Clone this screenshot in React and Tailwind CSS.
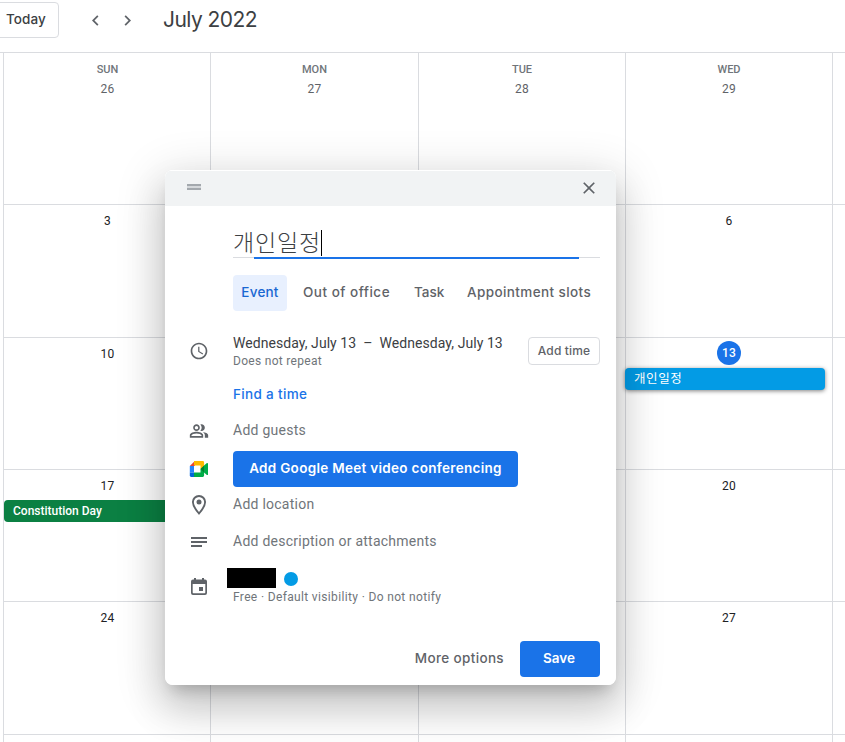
import { MdAccessTime, MdChevronLeft, MdChevronRight, MdClose, MdOutlinePeopleAlt } from "react-icons/md";

const weeks = [
  { days: ["26", "27", "28", "29", ""] },
  { days: ["3", "", "", "6", ""] },
  { days: ["10", "", "", "13", ""] },
  { days: ["17", "", "", "20", ""] },
  { days: ["24", "", "", "27", ""] },
  { days: ["", "", "", "", ""] },
];

const weekdays = ["SUN", "MON", "TUE", "WED", ""];

function Day({ day, week, col }) {
  const isToday = day === "13";
  return (
    <div className={`border-t border-[#dadce0] text-center ${col > 0 ? "border-l" : "pl-px"}`}>
      {week === 0 && (
        <div className="mt-[9px] h-4 text-[11px] leading-4 font-medium text-[#70757a]">{weekdays[col]}</div>
      )}
      {isToday ? (
        <div className="mx-auto mt-[3px] flex size-6 items-center justify-center rounded-full bg-[#1a73e8] text-xs font-medium tracking-[0.3px] text-white">
          {day}
        </div>
      ) : (
        <div
          className={`h-4 text-xs leading-4 tracking-[0.3px] ${
            week === 0 ? "mt-[3px] text-[#5f6368]" : "mt-2 text-[#202124]"
          }`}
        >
          {day}
        </div>
      )}
      {isToday && (
        <div className="-ml-px mt-[3px] h-[22px] w-[200px] rounded bg-[#039be5] pl-[9px] text-left text-[12.5px] leading-[22px] tracking-[0.6px] text-white shadow-[0_1px_4px_rgba(0,0,0,0.5)]">
          개인일정
        </div>
      )}
      {day === "17" && (
        <div className="-ml-px mt-1.5 h-[22px] w-[200px] rounded bg-[#0b8043] pl-[9px] text-left text-xs leading-[22px] font-medium text-white">
          Constitution Day
        </div>
      )}
    </div>
  );
}

function MeetLogo() {
  return (
    <svg width="20" height="20" viewBox="0 0 20 20" className="-mt-px">
      <path d="M.8 7 5.8 2v5z" fill="#ea4335" />
      <path d="M.8 7h4.2v6.5H.8z" fill="#2684fc" />
      <path d="M.8 13.5H5V18H2.200A1.400 1.400 0 0 1 .8 16.600z" fill="#0066da" />
      <path d="M5 2h8.700a1.400 1.400 0 0 1 1.400 1.400V8l-3.600 2V6.500H5z" fill="#ffba00" />
      <path d="M5 13.500h6.500V10l3.600-3v9.600a1.400 1.400 0 0 1-1.400 1.400H5z" fill="#00ac47" />
      <path d="m11.500 10 3.600-3.500v7z" fill="#00832d" />
      <path d="m15 6.500 2.900-2.400c.5-.4 1.100-.1 1.100.5v10.800c0 .6-.6.900-1.100.5L15 13.500z" fill="#00ac47" />
    </svg>
  );
}

function PlaceIcon() {
  return (
    <svg width="16" height="20" viewBox="0 0 16 20" fill="none" stroke="currentColor" strokeWidth="1.9" className="shrink-0">
      <path d="M8 1a6.100 6.100 0 0 0-6.100 6.100C1.900 11.500 8 18.500 8 18.500s6.100-7 6.100-11.400A6.100 6.100 0 0 0 8 1z" />
      <circle cx="8" cy="7.1" r="2.5" fill="currentColor" stroke="none" />
    </svg>
  );
}

function NotesIcon() {
  return (
    <svg width="16" height="10" viewBox="0 0 16 10" fill="currentColor">
      <path d="M0 0h16v2H0zM0 4h16v2H0zM0 8h11v2H0z" />
    </svg>
  );
}

function CalendarIcon() {
  return (
    <svg width="16" height="17" viewBox="0 0 16 17" fill="currentColor">
      <path
        fillRule="evenodd"
        d="M3 0h2v1.500h6V0h2v1.500h1A2 2 0 0 1 16 3.500V15a2 2 0 0 1-2 2H2a2 2 0 0 1-2-2V3.500a2 2 0 0 1 2-2h1zM1.700 6v8.600c0 .4.300.700.700.700h11.200c.4 0 .7-.3.700-.7V6z"
      />
      <path d="M8 9h4v4H8z" />
    </svg>
  );
}

function Row({ icon, className, children }) {
  return (
    <div className={`flex items-center gap-6 pl-6 ${className}`}>
      <div className="flex size-5 shrink-0 items-center justify-center text-[#5f6368]">{icon}</div>
      {children}
    </div>
  );
}

function EventDialog() {
  return (
    <div className="absolute top-[170px] left-[165px] h-[515px] w-[451px] overflow-hidden rounded-lg bg-white pt-px">
      <div className="flex h-[35px] items-center justify-between bg-[#f1f3f4] pr-[17px] pl-[22px]">
        <div className="mb-[3px] h-[6px] w-[14px] border-y-2 border-[#a3a8ad] bg-[#d5d8db]" />
        <MdClose size={20} className="mb-0.5 text-[#5f6368]" />
      </div>

      <div className="mr-4 ml-[68px] h-[53px] pt-[21px]">
        <div className="flex h-[31px] items-center border-b border-[#dadce0] font-['Noto_Sans_CJK_KR',sans-serif] text-[23px] font-light text-[#3c4043]">
          <span className="mb-0.5 whitespace-nowrap tracking-[0.8px]">개인일정</span>
          <span className="mt-px h-[26px] w-px bg-black" />
        </div>
        <div className="relative -mt-px mr-[21px] ml-[21px] h-[2px] bg-[#1a73e8]" />
      </div>

      <div className="mt-4 ml-[68px] flex h-9 items-center pb-0.5 font-['Inter',sans-serif] text-[13.5px] font-medium text-[#5f6368]">
        <div className="-mb-0.5 flex h-9 w-[54px] items-center justify-center rounded bg-[#e8f0fe] pb-0.5 tracking-[0.2px] text-[#1967d2]">
          Event
        </div>
        <span className="ml-4 w-[111px] whitespace-nowrap tracking-[0.5px]">Out of office</span>
        <span className="w-[53px]">Task</span>
        <span className="whitespace-nowrap tracking-[0.4px]">Appointment slots</span>
      </div>

      <Row icon={<MdAccessTime size={20} />} className="mt-5 h-10">
        <div className="w-[271px]">
          <div className="text-sm leading-5 tracking-[0.06px] whitespace-pre text-[#3c4043]">
            {"Wednesday, July 13  –  Wednesday, July 13"}
          </div>
          <div className="text-xs leading-[17px] tracking-[0.3px] text-[#70757a]">Does not repeat</div>
        </div>
        <button className="h-7 w-[72px] rounded border border-[#dadce0] font-['Inter',sans-serif] text-xs font-medium tracking-[0.15px] whitespace-nowrap text-[#5f6368]">
          Add time
        </button>
      </Row>
      <div className="ml-[68px] h-10 pt-[13px] font-['Inter',sans-serif] text-[13.5px] leading-5 font-medium tracking-[0.33px] text-[#1a73e8]">
        Find a time
      </div>

      <Row icon={<MdOutlinePeopleAlt size={20} />} className="h-10 text-sm tracking-[0.25px] text-[#70757a]">
        <span className="mb-0.5">Add guests</span>
      </Row>
      <Row icon={<MeetLogo />} className="h-9">
        <button className="h-9 w-[285px] rounded bg-[#1a73e8] pb-0.5 font-['Inter',sans-serif] text-[13.5px] font-semibold tracking-[0.3px] whitespace-nowrap text-white">
          Add Google Meet video conferencing
        </button>
      </Row>
      <Row icon={<PlaceIcon />} className="h-9 text-sm tracking-[0.25px] text-[#70757a]">
        <span className="mb-0.5">Add location</span>
      </Row>
      <Row icon={<NotesIcon />} className="h-[37px] text-sm tracking-[0.25px] text-[#70757a]">
        <span className="mb-0.5">Add description or attachments</span>
      </Row>
      <Row icon={<CalendarIcon />} className="h-[53px]">
        <div>
          <div className="-ml-1.5 flex h-5 items-center gap-2">
            <div className="h-5 w-[49px] bg-black" />
            <div className="mt-0.5 size-3.5 rounded-full bg-[#039be5]" />
          </div>
          <div className="h-[17px] pt-px text-xs leading-[17px] tracking-[0.35px] whitespace-nowrap text-[#70757a]">
            Free · Default visibility · Do not notify
          </div>
        </div>
      </Row>

      <div className="mt-7 mr-4 flex h-9 items-center justify-end gap-4 font-['Inter',sans-serif] text-[13.5px]">
        <span className="pb-0.5 font-medium tracking-[0.35px] text-[#5f6368]">More options</span>
        <button className="h-9 w-20 rounded bg-[#1a73e8] pr-[9px] pb-0.5 pl-[7px] font-semibold text-white">Save</button>
      </div>
    </div>
  );
}

export default function App() {
  return (
    <div className="relative h-[742px] w-[845px] overflow-hidden bg-white font-['Roboto','Noto_Sans_CJK_KR',sans-serif]">
      <header className="flex h-[52px] items-start pt-0.5 font-['Inter',sans-serif] text-[#3c4043]">
        <button className="-ml-3 flex h-9 w-[71px] items-center justify-center rounded border border-[#dadce0] pb-0.5 pl-[5px] text-[13.5px] font-medium tracking-[0.1px]">
          Today
        </button>
        <div className="ml-[26px] flex h-9 items-center gap-[11px] text-[#5f6368]">
          <MdChevronLeft size={21} />
          <MdChevronRight size={21} />
        </div>
        <h1 className="ml-[25px] text-[21px] leading-9 font-normal tracking-[-0.55px]">July 2022</h1>
      </header>

      <div className="flex h-[690px]">
        <div className="w-1 shrink-0 border-t border-r border-[#dadce0]" />
        <div className="grid flex-1 grid-cols-[206px_208px_207px_207px_1fr] grid-rows-[152px_133px_132px_132px_133px_1fr]">
          {weeks.map((week, w) => week.days.map((day, col) => <Day key={`${w}-${col}`} day={day} week={w} col={col} />))}
        </div>
      </div>

      <div className="absolute top-[170px] left-[165px] h-[515px] w-[451px] rounded-lg shadow-[0_24px_38px_3px_rgba(0,0,0,0.14),0_9px_46px_8px_rgba(0,0,0,0.12),0_11px_15px_-7px_rgba(0,0,0,0.2)]" />
      <EventDialog />
    </div>
  );
}
